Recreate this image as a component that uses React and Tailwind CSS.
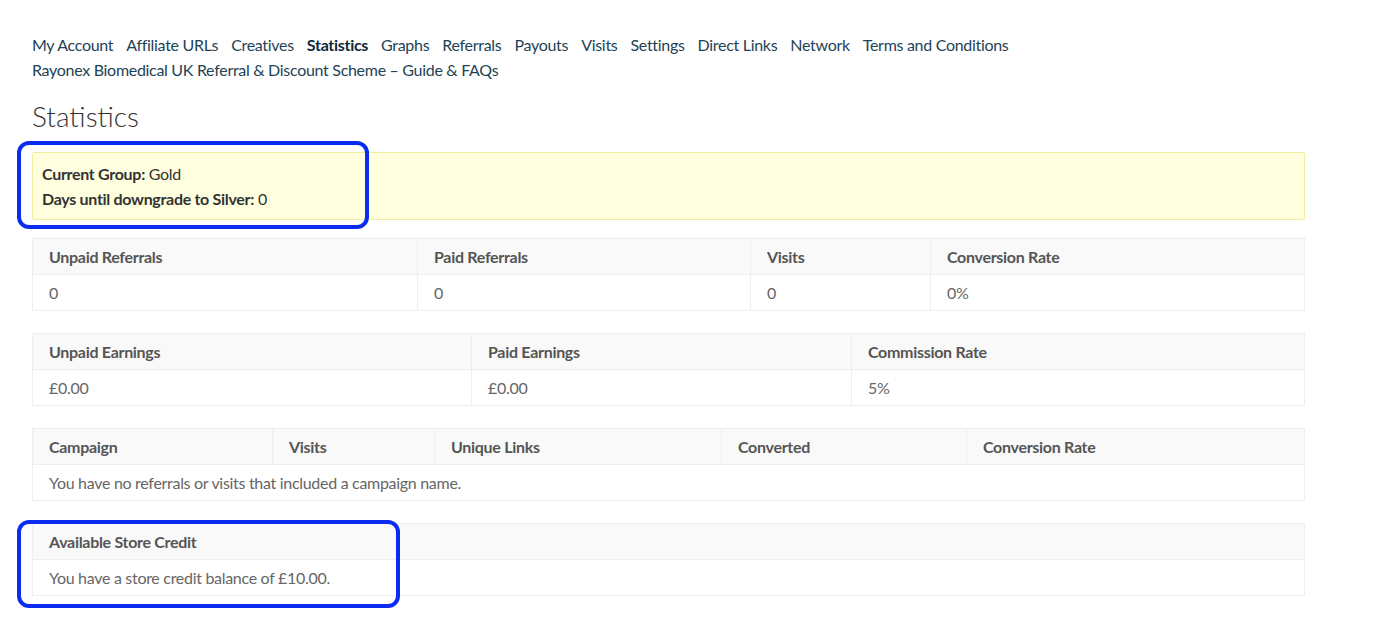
import React from "react";

const navItems = [
  "My Account",
  "Affiliate URLs",
  "Creatives",
  "Statistics",
  "Graphs",
  "Referrals",
  "Payouts",
  "Visits",
  "Settings",
  "Direct Links",
  "Network",
  "Terms and Conditions",
  "Rayonex Biomedical UK Referral & Discount Scheme – Guide & FAQs",
];

function StatTable({ cols, headers, values, fullRow }) {
  return (
    <div className="border border-[#eeeeee] w-full">
      <div className="grid bg-[#f9f9f9] border-b border-[#eeeeee]" style={{ gridTemplateColumns: cols }}>
        {headers.map((h, i) => (
          <div
            key={h + i}
            className={
              "h-[35px] flex items-center pl-[16px] font-bold text-[#555555] " +
              (i > 0 ? "border-l border-[#eeeeee]" : "")
            }
          >
            {h}
          </div>
        ))}
      </div>
      {fullRow ? (
        <div className="h-[35px] flex items-center pl-[16px] text-[#666666]">{fullRow}</div>
      ) : (
        <div className="grid" style={{ gridTemplateColumns: cols }}>
          {values.map((v, i) => (
            <div
              key={i}
              className={
                "h-[35px] flex items-center pl-[16px] text-[#666666] " +
                (i > 0 ? "border-l border-[#eeeeee]" : "")
              }
            >
              {v}
            </div>
          ))}
        </div>
      )}
    </div>
  );
}

export default function App() {
  return (
    <div
      className="bg-white min-h-screen text-[16px] leading-[25px] tracking-[-0.3px]"
      style={{ fontFamily: "Lato, 'Noto Sans', sans-serif" }}
    >
      <div className="pl-[32px] pt-[32px] w-[1305px]">
        <nav className="flex flex-wrap gap-x-[13px] text-[#1e4356]">
          {navItems.map((n) => (
            <a key={n} className={n === "Statistics" ? "font-bold text-[#10293a]" : ""}>
              {n}
            </a>
          ))}
        </nav>
        <h1 className="mt-[17px] mb-[19px] text-[28px] leading-[34px] font-light tracking-normal text-[#333333]">
          Statistics
        </h1>

        <div className="relative">
          <div className="border border-[#f1ec9d] bg-[#ffffe0] rounded-[2px] px-[9px] py-[8px] text-[#333333]">
            <div>
              <span className="font-bold">Current Group:</span> Gold
            </div>
            <div>
              <span className="font-bold">Days until downgrade to Silver:</span> 0
            </div>
          </div>
          <div className="absolute left-[-15px] top-[-11px] w-[352px] h-[88px] border-[4px] border-[#0a2cf0] rounded-[12px] pointer-events-none" />
        </div>

        <div className="mt-[18px] flex flex-col gap-[22px]">
          <StatTable
            cols="384px 333px 180px 1fr"
            headers={["Unpaid Referrals", "Paid Referrals", "Visits", "Conversion Rate"]}
            values={["0", "0", "0", "0%"]}
          />
          <StatTable
            cols="438px 380px 1fr"
            headers={["Unpaid Earnings", "Paid Earnings", "Commission Rate"]}
            values={["£0.00", "£0.00", "5%"]}
          />
          <StatTable
            cols="239px 162px 287px 245px 1fr"
            headers={["Campaign", "Visits", "Unique Links", "Converted", "Conversion Rate"]}
            fullRow="You have no referrals or visits that included a campaign name."
          />
          <div className="relative">
            <StatTable
              cols="1fr"
              headers={["Available Store Credit"]}
              fullRow="You have a store credit balance of £10.00."
            />
            <div className="absolute left-[-15px] top-[-3px] w-[383px] h-[88px] border-[4px] border-[#0a2cf0] rounded-[12px] pointer-events-none" />
          </div>
        </div>
      </div>
    </div>
  );
}
